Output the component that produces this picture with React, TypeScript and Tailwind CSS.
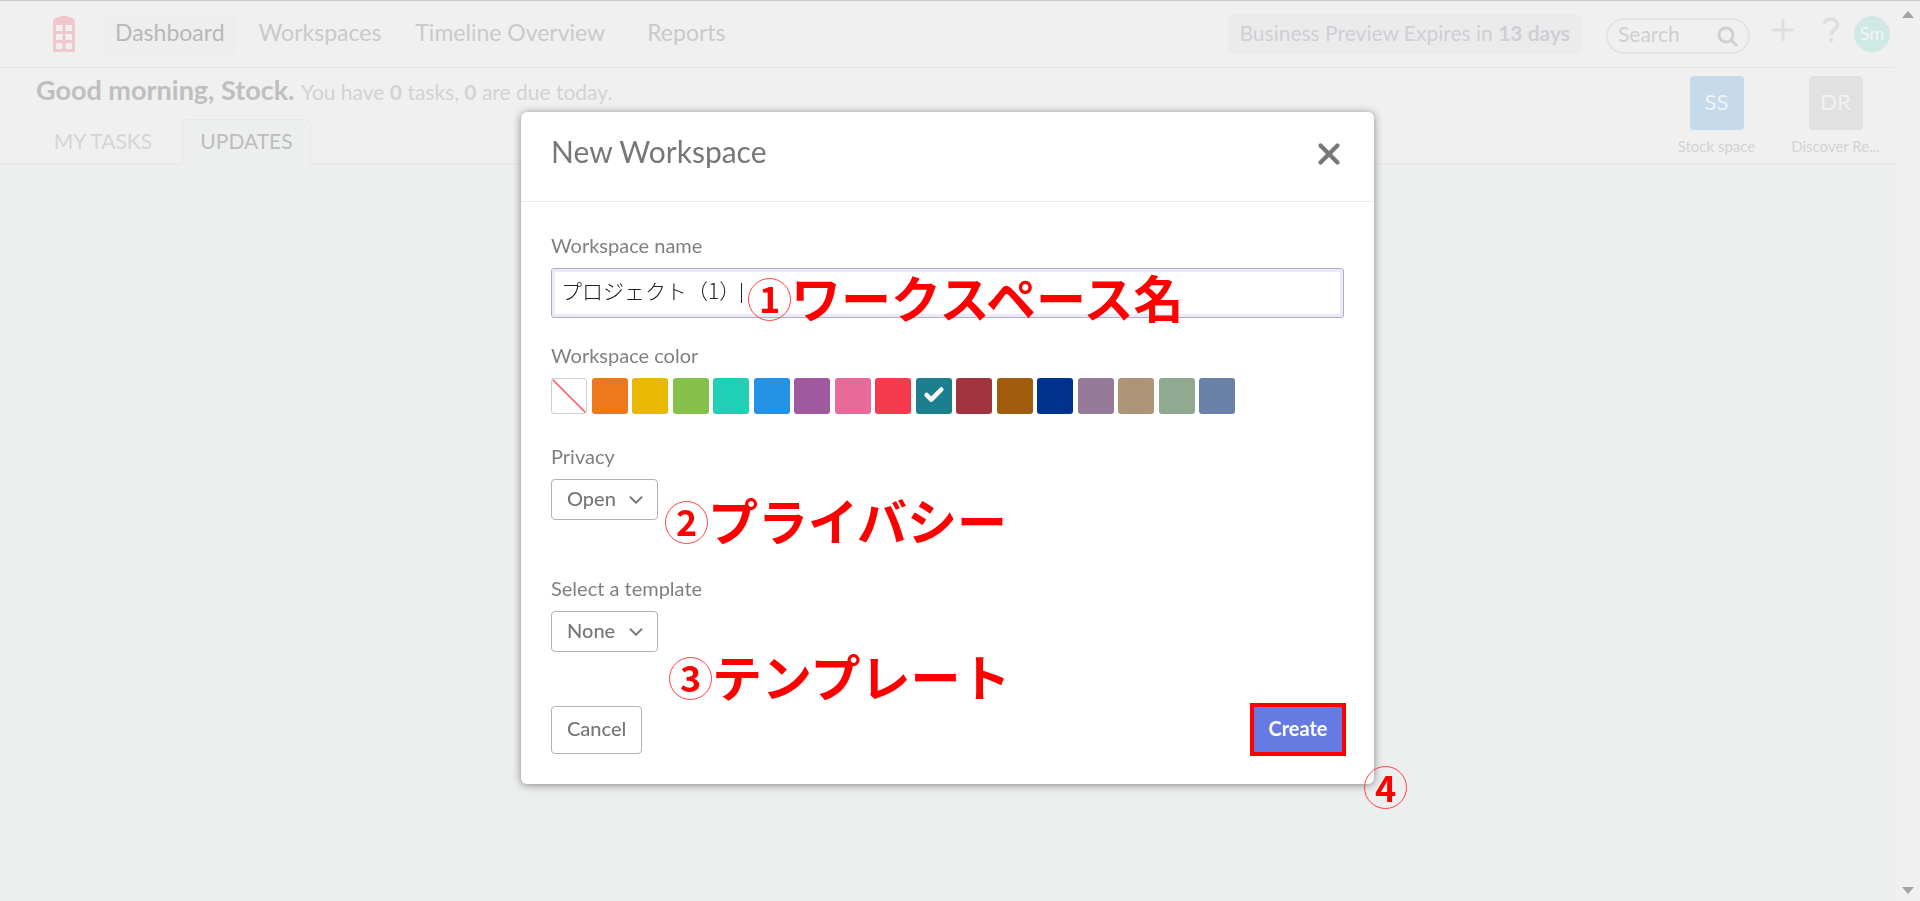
import { useState } from "react";
import { Check, ChevronDown, X } from "lucide-react";

const navLinks = [
    { label: "Dashboard", active: true },
    { label: "Workspaces", active: false },
    { label: "Timeline Overview", active: false },
    { label: "Reports", active: false },
];

const workspaces = [
    { initials: "SS", name: "Stock space", bg: "bg-[#c5daeb]" },
    { initials: "DR", name: "Discover Re...", bg: "bg-[#e1e1e1]" },
];

const swatches = [
    { name: "None", bg: "bg-white" },
    { name: "Orange", bg: "bg-[#ec7a1c]" },
    { name: "Yellow", bg: "bg-[#e9b802]" },
    { name: "Green", bg: "bg-[#87c14b]" },
    { name: "Turquoise", bg: "bg-[#1fd0b6]" },
    { name: "Blue", bg: "bg-[#2492e4]" },
    { name: "Purple", bg: "bg-[#9f599f]" },
    { name: "Pink", bg: "bg-[#e86a99]" },
    { name: "Red", bg: "bg-[#f43b4d]" },
    { name: "Teal", bg: "bg-[#1b7f8e]" },
    { name: "Maroon", bg: "bg-[#a23440]" },
    { name: "Brown", bg: "bg-[#a15d0d]" },
    { name: "Navy", bg: "bg-[#00328d]" },
    { name: "Mauve", bg: "bg-[#967a9a]" },
    { name: "Tan", bg: "bg-[#ad9378]" },
    { name: "Sage", bg: "bg-[#90aa92]" },
    { name: "Slate", bg: "bg-[#6a82a8]" },
];

function Logo() {
    return (
        <svg width="22" height="36" viewBox="0 0 22 36" fill="#efc8cd" aria-hidden="true">
            <path
                fillRule="evenodd"
                d="M0 5C2 1.5 7 0 11 0s9 1.5 11 5v29.5a1.5 1.5 0 0 1-1.500 1.500h-19a1.500 1.500 0 0 1-1.500-1.500zM3 9v6h6.500V9zM12.500 9v6H19V9zM3 18v6h6.500v-6zM12.500 18v6H19v-6zM3 27v6h6.500v-6zM12.500 27v6H19v-6z"
            />
        </svg>
    );
}

function Header() {
    return (
        <header className="flex h-[67px] items-center border-b border-[#e6e6e6] pr-[5px] pl-[53px]">
            <Logo />
            <nav className="ml-7 flex items-center gap-2.5">
                {navLinks.map((link) => (
                    <a
                        key={link.label}
                        href="#"
                        className={`flex h-10 items-center rounded px-3 pb-1 text-[23px] last:ml-2 ${link.active ? "bg-[#eeeeee] text-[#b8b8b8]" : "text-[#cacaca]"}`}
                    >
                        {link.label}
                    </a>
                ))}
            </nav>
            <div className="ml-auto flex items-center">
                <a href="#" className="flex h-10 items-center rounded-md bg-[#ebebeb] px-3 pb-0.5 text-[21px] text-[#cfcfd6]">
                    <span>
                        Business Preview Expires in <b>13 days</b>
                    </span>
                </a>
                <div className="mt-1 ml-6 flex h-9 w-36 items-center rounded-full border-2 border-[#e4e4e4] pr-2.5 pl-2.5">
                    <input
                        aria-label="Search"
                        placeholder="Search"
                        className="w-full min-w-0 bg-transparent pb-1 text-[21px] outline-none placeholder:text-[#cfcfcf]"
                    />
                    <svg width="21" height="21" viewBox="0 0 21 21" fill="none" stroke="#d0d0d0" strokeWidth="3" strokeLinecap="round" className="shrink-0">
                        <circle cx="9" cy="9" r="7" />
                        <path d="M14.500 14.500L19 19" />
                    </svg>
                </div>
                <button aria-label="Add" className="mb-2 ml-[22px]">
                    <svg width="22" height="22" viewBox="0 0 22 22" stroke="#dedee2" strokeWidth="3" strokeLinecap="round">
                        <path d="M11 1.500v19M1.500 11h19" />
                    </svg>
                </button>
                <button aria-label="Help" className="mb-2 ml-7">
                    <svg width="18" height="26" viewBox="0 0 18 26" fill="none" stroke="#dedee2" strokeWidth="3.500">
                        <path d="M2 6.500C3.500 0.500 15.500 0.500 15.500 8c0 5-6.500 5-6.500 10M9 21v4" />
                    </svg>
                </button>
                <button className="ml-3.5 flex h-9 w-9 items-center justify-center rounded-full bg-[#d0e9e4] pb-0.5 text-[18px] text-[#f2f7f6]">
                    Sm
                </button>
            </div>
        </header>
    );
}

function Greeting() {
    return (
        <section className="flex h-24 justify-between border-b border-[#e6e6e6] pl-9">
            <div className="flex flex-col justify-between pt-1">
                <h1 className="text-[27px] leading-9 font-bold text-[#bfbfbf]">
                    Good morning, Stock.{" "}
                    <span className="text-[21px] font-normal text-[#d3d3d3]">
                        You have <b>0</b> tasks, <b>0</b> are due today.
                    </span>
                </h1>
                <div className="-mb-px flex text-[21px]">
                    <button className="h-[45px] w-[146px] pr-3 pb-0.5 text-[#d5d5d5]">MY TASKS</button>
                    <button className="h-[45px] w-[129px] rounded-t-md border border-b-0 border-[#e6e6e6] bg-[#edefee] pb-0.5 text-[#bdbdbd]">
                        UPDATES
                    </button>
                </div>
            </div>
            <div className="flex pt-2">
                {workspaces.map((ws) => (
                    <a key={ws.name} href="#" className="flex w-[119px] flex-col items-center gap-[5px] text-[15px] text-[#d3d3d6]">
                        <span className={`flex h-[54px] w-[54px] items-center justify-center rounded-sm pb-1 text-[22px] text-[#f0f2f3] ${ws.bg}`}>
                            {ws.initials}
                        </span>
                        {ws.name}
                    </a>
                ))}
            </div>
        </section>
    );
}

function ScrollTrack() {
    return (
        <div className="flex w-[25px] shrink-0 flex-col items-center justify-between bg-[#f0f0f0] pt-2.5 pb-[7px]">
            <svg width="12" height="7" viewBox="0 0 12 7" fill="#a3a3a3">
                <path d="M0 7L6 0l6 7z" />
            </svg>
            <svg width="12" height="7" viewBox="0 0 12 7" fill="#a3a3a3">
                <path d="M0 0l6 7 6-7z" />
            </svg>
        </div>
    );
}

interface DropDownProps {
    id: string;
    label: string;
    options: string[];
}

function DropDown({ id, label, options }: DropDownProps) {
    return (
        <div className="flex flex-col items-start">
            <label htmlFor={id} className="text-[20px] leading-6">
                {label}
            </label>
            <div className="relative mt-[11px]">
                <select
                    id={id}
                    className="h-[41px] w-[107px] appearance-none rounded border border-[#b3b3b3] bg-white pb-1 pl-[15px] text-[20px] font-medium text-[#777777]"
                >
                    {options.map((option) => (
                        <option key={option}>{option}</option>
                    ))}
                </select>
                <ChevronDown size={22} strokeWidth={2} className="pointer-events-none absolute top-2.5 right-[11px] text-[#777777]" />
            </div>
        </div>
    );
}

interface CalloutProps {
    step: number;
    text?: string;
    className: string;
}

function Callout({ step, text, className }: CalloutProps) {
    return (
        <div className={`pointer-events-none absolute flex items-center font-['Noto_Sans_CJK_JP',sans-serif] font-bold whitespace-nowrap text-[#ff0000] ${className}`}>
            <span className="flex h-[43px] w-[43px] items-center justify-center rounded-full border border-[#ff4040] pb-1 text-[36px] leading-none">
                {step}
            </span>
            {text && <span className="pb-1.5 text-[50px] leading-[46px]">{text}</span>}
        </div>
    );
}

function NewWorkspaceDialog() {
    const [name, setName] = useState("プロジェクト（1）");
    const [color, setColor] = useState("Teal");

    return (
        <div
            role="dialog"
            aria-labelledby="dialog-title"
            className="relative w-[853px] rounded-md bg-white text-[#808080] shadow-[0_1px_9px_rgba(0,0,0,0.45)]"
        >
            <div className="flex h-[90px] items-start justify-between border-b border-[#ebebeb] pt-5 pr-7 pl-[30px]">
                <h2 id="dialog-title" className="text-[30px] leading-[38px] text-[#777777]">
                    New Workspace
                </h2>
                <button aria-label="Close" className="mt-[5px] text-[#777777]">
                    <X size={34} strokeWidth={3} />
                </button>
            </div>

            <form className="px-[30px] pt-[31px] pb-7" onSubmit={(e) => e.preventDefault()}>
                <label htmlFor="workspace-name" className="block text-[20px] leading-6">
                    Workspace name
                </label>
                <div className="relative mt-[11px]">
                    <input
                        id="workspace-name"
                        value={name}
                        onChange={(e) => setName(e.target.value)}
                        className="h-[50px] w-full rounded-[3px] border border-[#b0b0b8] bg-white pb-1.5 pl-[9px] font-['Noto_Sans_CJK_JP',sans-serif] text-[21px] font-light text-[#222222] inset-ring-3 inset-ring-[#eaeafc] outline-none"
                    />
                    <span className="absolute top-[15px] left-[190px] h-5 w-px bg-[#222222]" />
                </div>

                <fieldset className="mt-[25px]">
                    <legend className="text-[20px] leading-6">Workspace color</legend>
                    <div className="mt-[11px] flex w-[684px] justify-between">
                        {swatches.map((swatch) => (
                            <label
                                key={swatch.name}
                                className={`flex h-9 w-9 items-center justify-center overflow-hidden rounded-[3px] ${swatch.bg} ${swatch.name === "None" ? "border border-[#d0d0d0]" : ""}`}
                            >
                                <input
                                    type="radio"
                                    name="color"
                                    aria-label={swatch.name}
                                    checked={color === swatch.name}
                                    onChange={() => setColor(swatch.name)}
                                    className="sr-only"
                                />
                                {swatch.name === "None" && (
                                    <svg width="34" height="34" viewBox="0 0 34 34" stroke="#f8505c" strokeWidth="1.500">
                                        <path d="M0 0l34 34" />
                                    </svg>
                                )}
                                {color === swatch.name && <Check size={22} strokeWidth={5} className="mb-0.5 text-white" />}
                            </label>
                        ))}
                    </div>
                </fieldset>

                <div className="mt-[30px] flex flex-col gap-14">
                    <DropDown id="privacy" label="Privacy" options={["Open", "Private"]} />
                    <DropDown id="template" label="Select a template" options={["None"]} />
                </div>

                <div className="mt-[51px] flex items-center justify-between">
                    <button type="button" className="h-12 rounded border border-[#b3b3b3] px-[15px] pb-1 text-[20px] font-medium text-[#777777]">
                        Cancel
                    </button>
                    <button type="submit" className="-mr-0.5 h-[53px] w-24 border-4 border-[#ff0000] bg-[#657be2] pb-1 text-[20px] font-bold text-white">
                        Create
                    </button>
                </div>
            </form>

            <Callout step={1} text="ワークスペース名" className="top-[161px] left-[227px]" />
            <Callout step={2} text="プライバシー" className="top-[384px] left-[144px]" />
            <Callout step={3} text="テンプレート" className="top-[540px] left-[148px]" />
            <Callout step={4} className="top-[654px] left-[843px]" />
        </div>
    );
}

export default function App() {
    return (
        <div className="flex min-h-screen border-t border-[#cacaca] bg-[#edefee] font-[Lato,'Noto_Sans_CJK_JP',sans-serif]">
            <div className="min-w-0 flex-1">
                <div className="bg-[#f0f0f0]">
                    <Header />
                    <Greeting />
                </div>
            </div>
            <ScrollTrack />
            <div className="fixed inset-0 right-[25px] flex items-start justify-center pt-28">
                <NewWorkspaceDialog />
            </div>
        </div>
    );
}
